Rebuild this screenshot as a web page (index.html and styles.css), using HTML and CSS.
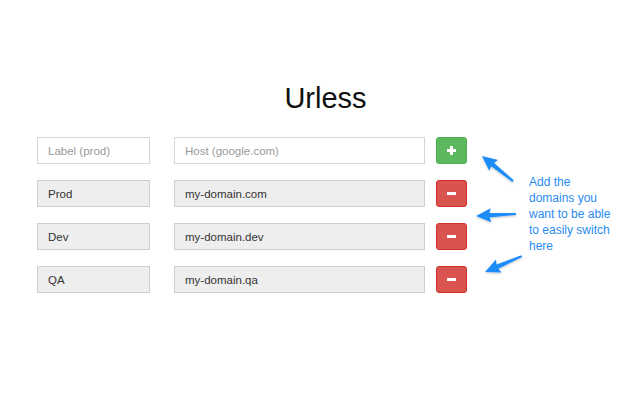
FILE: index.html
```html
<!DOCTYPE html>
<html lang="en">
<head>
    <meta charset="UTF-8">
    <meta name="viewport" content="width=device-width, initial-scale=1.0">
    <title>Urless</title>
    <link rel="stylesheet" href="styles.css">
</head>

<body>
    <div class="page">
        <h1>Urless</h1>

        <div class="editor">
            <div class="rows">
                <div class="row">
                    <input type="text" class="field field-label" placeholder="Label (prod)">
                    <input type="text" class="field field-host" placeholder="Host (google.com)">
                    <button class="btn btn-add" type="button">
                        <svg width="9" height="9" viewBox="0 0 9 9"><path d="M3 0h3v3h3v3H6v3H3V6H0V3h3z" fill="#fff"/></svg>
                    </button>
                </div>
                <div class="row">
                    <input type="text" class="field field-label filled" value="Prod">
                    <input type="text" class="field field-host filled" value="my-domain.com">
                    <button class="btn btn-remove" type="button"><span class="minus"></span></button>
                </div>
                <div class="row">
                    <input type="text" class="field field-label filled" value="Dev">
                    <input type="text" class="field field-host filled" value="my-domain.dev">
                    <button class="btn btn-remove" type="button"><span class="minus"></span></button>
                </div>
                <div class="row">
                    <input type="text" class="field field-label filled" value="QA">
                    <input type="text" class="field field-host filled" value="my-domain.qa">
                    <button class="btn btn-remove" type="button"><span class="minus"></span></button>
                </div>
            </div>

            <p class="note">Add the<br>domains you<br>want to be able<br>to easily switch<br>here</p>
        </div>

        <!-- hand drawn annotation arrows -->
        <svg class="arrows" width="640" height="400" viewBox="0 0 640 400">
            <defs>
                <filter id="shade" x="-20%" y="-20%" width="140%" height="140%">
                    <feDropShadow dx="0" dy="1" stdDeviation="0.8" flood-color="#000" flood-opacity="0.25"/>
                </filter>
                <polygon id="arrow" points="0,0 15,-7 13.5,-2.2 40,-1 40,1 13.5,2.2 15,7"/>
            </defs>
            <g fill="#1e8cf8" filter="url(#shade)">
                <use href="#arrow" transform="translate(482 156) rotate(38.9)"/>
                <use href="#arrow" transform="translate(476 216) rotate(-3)"/>
                <use href="#arrow" transform="translate(485 272) rotate(-23.4)"/>
            </g>
        </svg>
    </div>
</body>
</html>
```

FILE: styles.css
```css
/* General page */
body {
    margin: 0;
    padding: 0;
    background-color: #fff;
    font-family: "Liberation Sans", Arial, sans-serif;
}

.page {
    position: relative;
    width: 640px;
    height: 400px;
    padding-top: 82px;
    box-sizing: border-box;
    overflow: hidden;
}

h1 {
    margin: 0;
    padding-left: 11px;
    text-align: center;
    font-size: 29px;
    line-height: 32px;
    font-weight: normal;
    color: #111;
}

/* Rows of label / host pairs */
.editor {
    display: flex;
    align-items: flex-start;
    margin-top: 23px;
    padding-left: 37px;
}

.rows {
    display: flex;
    flex-direction: column;
    gap: 16px;
}

.row {
    display: flex;
    align-items: center;
}

.field {
    box-sizing: border-box;
    height: 27px;
    padding: 0 10px;
    border: 1px solid #d6d6d6;
    border-radius: 0;
    background-color: #fff;
    font-family: "Liberation Sans", Arial, sans-serif;
    font-size: 11.5px;
    color: #333;
    outline: none;
}

.field::placeholder {
    color: #9a9a9a;
}

.field.filled {
    background-color: #eeeeee;
    border-color: #cfcfcf;
}

.field-label {
    width: 113px;
    margin-right: 24px;
}

.field-host {
    width: 251px;
    margin-right: 11px;
}

/* Buttons */
.btn {
    box-sizing: border-box;
    width: 31px;
    height: 27px;
    padding: 0;
    border-radius: 3px;
    border: 1px solid transparent;
    display: flex;
    align-items: center;
    justify-content: center;
    cursor: pointer;
}

.btn-add {
    background-color: #5cb85c;
    border-color: #4cae4c;
}

.btn-remove {
    background-color: #d9534f;
    border-color: #d2302b;
}

.minus {
    display: block;
    width: 9px;
    height: 3px;
    background-color: #fff;
}

/* Annotation */
.note {
    margin: 37px 0 0 62px;
    font-size: 12px;
    line-height: 16px;
    color: #2a8cf0;
}

.arrows {
    position: absolute;
    left: 0;
    top: 0;
    pointer-events: none;
}
```
